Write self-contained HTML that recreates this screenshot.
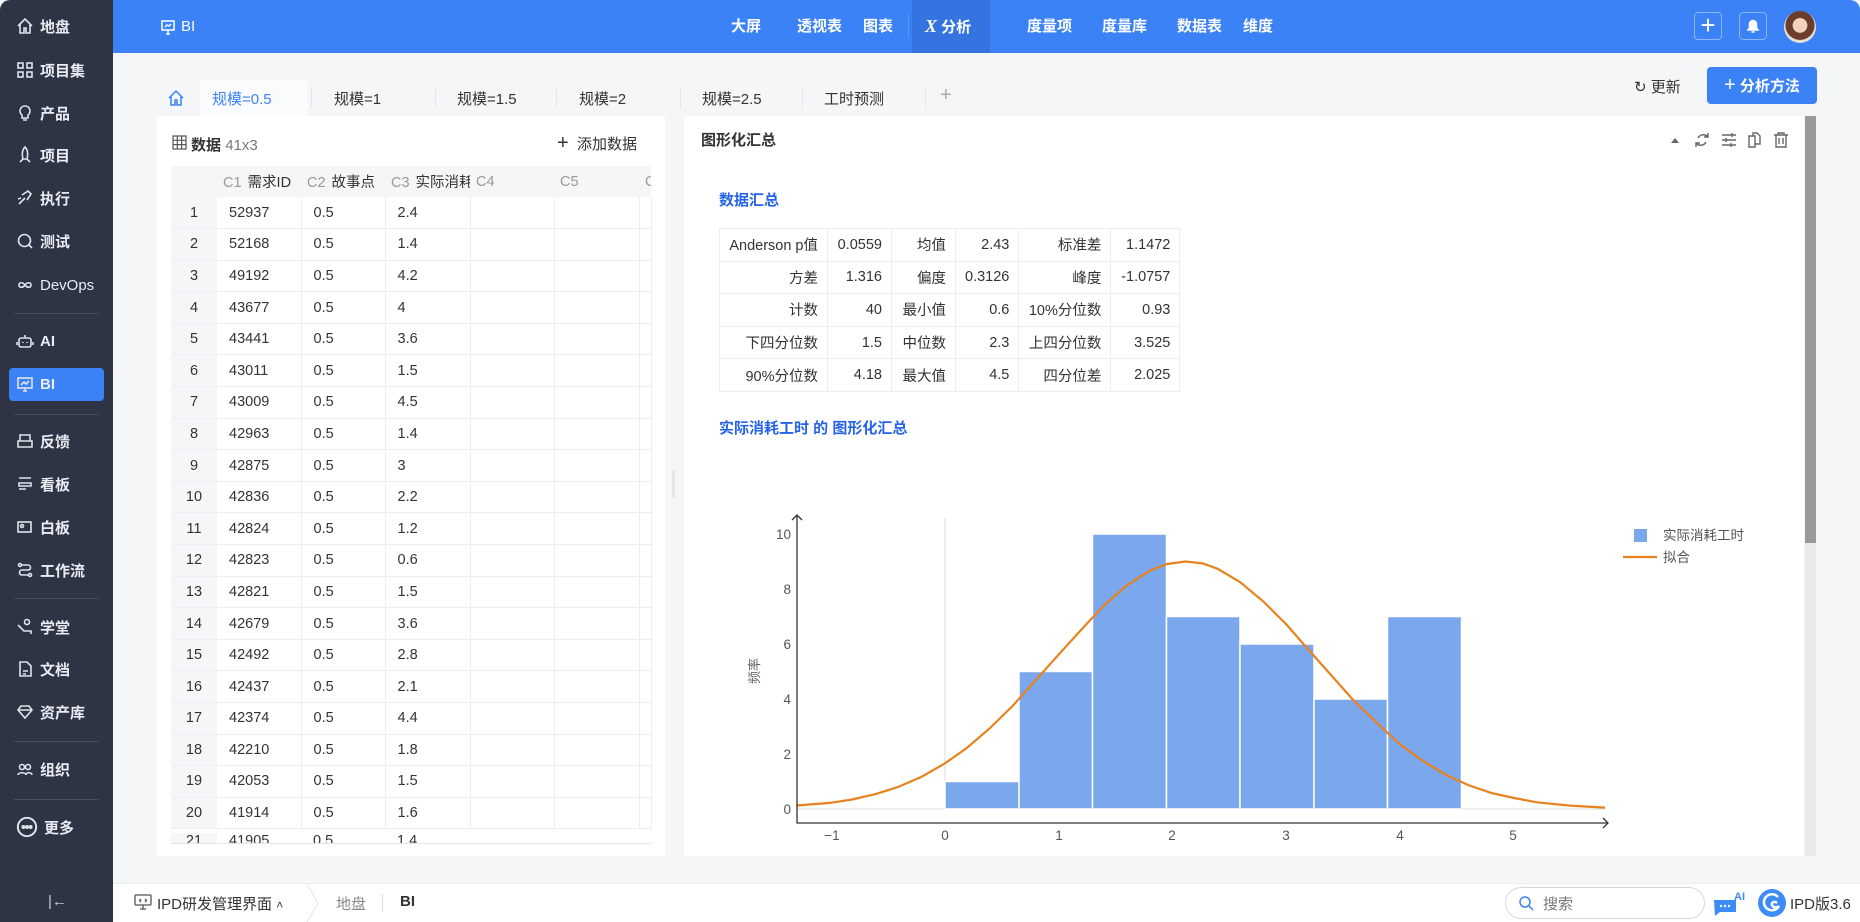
<!DOCTYPE html>
<html><head><meta charset="utf-8"><style>
*{box-sizing:border-box;margin:0;padding:0}
body{width:1860px;height:922px;overflow:hidden;background:#f5f6f8;font-family:"Liberation Sans","Noto Sans CJK SC",sans-serif;color:#333;position:relative}
.abs{position:absolute}
#side{left:0;top:0;width:113px;height:922px;background:#2e3444;border-top-left-radius:10px}
.si{position:absolute;left:16px;height:26px;display:flex;align-items:center;color:#e9ecf2;font-size:15px;font-weight:bold}
.si svg{width:18px;height:18px;margin-right:6px;fill:none;stroke:#dfe3ea;stroke-width:1.6}
.dv{position:absolute;left:14px;width:85px;height:1px;background:#464d5c}
#hdr{left:113px;top:0;width:1747px;height:53px;background:#3b82f6;border-top-right-radius:10px}
.nv{position:absolute;top:0;height:53px;line-height:53px;color:#fff;font-size:15px;font-weight:bold}
.tab{position:absolute;top:88px;font-size:15px;color:#333}
.sep{position:absolute;top:89px;width:1px;height:20px;background:#e3e5e9}
.panel{position:absolute;background:#fff}
table{border-collapse:collapse}
#dt{position:absolute;left:171px;top:166px;width:480px;font-size:14.5px;table-layout:fixed}
#dt td{height:31.6px;border-right:1px solid #eceef1;border-bottom:1px solid #eceef1;padding-left:12px;color:#333;white-space:nowrap;overflow:hidden}
#dt td.n{background:#f5f6f8;text-align:center;padding:0;border-right:none}
#dt tr.h td{background:#f5f6f8;color:#999;height:31px;border-right:none;border-bottom:none;padding-left:6px}
#dt tr.h td b{color:#333;font-weight:normal;margin-left:6px}
#st{position:absolute;left:719px;top:228px;font-size:14.5px}
#st td{border:1px solid #eceef1;height:32.6px;text-align:right;padding:0 9px;color:#333}
</style></head><body>
<div id="side" class="abs">
<div class="si" style="top:13px"><svg viewBox="0 0 18 18"><path d="M2 9 9 2l7 7M4 7v9h4v-5h2v5h4V7"/></svg>地盘</div>
<div class="si" style="top:57px"><svg viewBox="0 0 18 18"><rect x="2" y="2" width="5" height="5"/><rect x="11" y="2" width="5" height="5"/><rect x="2" y="11" width="5" height="5"/><rect x="11" y="11" width="5" height="5"/></svg>项目集</div>
<div class="si" style="top:100px"><svg viewBox="0 0 18 18"><path d="M9 2a5 5 0 0 0-3 9v3h6v-3a5 5 0 0 0-3-9zM7 16h4"/></svg>产品</div>
<div class="si" style="top:142px"><svg viewBox="0 0 18 18"><path d="M9 1c3 3 3 8 2 12H7C6 9 6 4 9 1zM7 13l-3 3M11 13l3 3"/></svg>项目</div>
<div class="si" style="top:185px"><svg viewBox="0 0 18 18"><path d="M3 15 9 9M6 6l6-4 3 3-4 6M2 10l3-1"/></svg>执行</div>
<div class="si" style="top:228px"><svg viewBox="0 0 18 18"><circle cx="8.5" cy="8.5" r="6"/><path d="M13 13l3 3"/></svg>测试</div>
<div class="si" style="top:272px;font-weight:normal"><svg viewBox="0 0 18 18"><path d="M9 9c-2-3-6-3-6 0s4 3 6 0 6-3 6 0-4 3-6 0"/></svg>DevOps</div>
<div class="dv" style="top:313px"></div>
<div class="si" style="top:328px"><svg viewBox="0 0 18 18"><rect x="3" y="6" width="12" height="9" rx="2"/><path d="M9 3v3M1 10v3M17 10v3M7 10v1M11 10v1"/></svg>AI</div>
<div class="abs" style="left:9px;top:368px;width:95px;height:33px;background:#3b82f6;border-radius:4px"></div>
<div class="si" style="top:371px"><svg viewBox="0 0 18 18"><rect x="2" y="3" width="14" height="10"/><path d="M5 10l3-3 2 2 3-3M7 16h4M9 13v3"/></svg>BI</div>
<div class="dv" style="top:414px"></div>
<div class="si" style="top:428px"><svg viewBox="0 0 18 18"><path d="M4 3h10v6H4zM2 9h14v6H2z"/></svg>反馈</div>
<div class="si" style="top:471px"><svg viewBox="0 0 18 18"><path d="M3 3h12M3 8h12v3H3zM3 14h7"/></svg>看板</div>
<div class="si" style="top:514px"><svg viewBox="0 0 18 18"><rect x="2" y="4" width="13" height="10"/><circle cx="6" cy="8" r="1.5"/></svg>白板</div>
<div class="si" style="top:557px"><svg viewBox="0 0 18 18"><circle cx="4" cy="4" r="1.5"/><circle cx="14" cy="14" r="1.5"/><path d="M6 4h6a2.5 2.5 0 0 1 0 5H6a2.5 2.5 0 0 0 0 5h6"/></svg>工作流</div>
<div class="dv" style="top:598px"></div>
<div class="si" style="top:614px"><svg viewBox="0 0 18 18"><circle cx="11" cy="4" r="2.5"/><path d="M2 7l6 6h7v3"/></svg>学堂</div>
<div class="si" style="top:656px"><svg viewBox="0 0 18 18"><path d="M4 2h7l4 4v10H4zM7 11h5M7 14h3"/></svg>文档</div>
<div class="si" style="top:699px"><svg viewBox="0 0 18 18"><path d="M2 7l3-4h8l3 4-7 8zM2 7h14"/></svg>资产库</div>
<div class="dv" style="top:741px"></div>
<div class="si" style="top:756px"><svg viewBox="0 0 18 18"><circle cx="6" cy="7" r="2.5"/><circle cx="12" cy="7" r="2.5"/><path d="M2 15c0-3 8-3 8 0M10 15c0-3 6-3 6 0"/></svg>组织</div>
<div class="dv" style="top:799px"></div>
<div class="si" style="top:814px"><svg viewBox="0 0 18 18" style="width:22px;height:22px"><circle cx="9" cy="9" r="7.5"/><circle cx="6" cy="9" r=".8" fill="#dfe3ea"/><circle cx="9" cy="9" r=".8" fill="#dfe3ea"/><circle cx="12" cy="9" r=".8" fill="#dfe3ea"/></svg>更多</div>
<div class="abs" style="left:48px;top:893px;color:#ccd;font-size:15px">|&larr;</div>
</div>

<div id="hdr" class="abs">
<svg class="abs" style="left:47px;top:19px" width="16" height="16" viewBox="0 0 16 16" fill="none" stroke="#fff" stroke-width="1.5"><rect x="2" y="2" width="12" height="9"/><path d="M5 8l2-2 2 1 2-2M6 15h4M8 11v4"/></svg>
<div class="nv" style="left:68px;font-weight:normal">BI</div>
<div class="nv" style="left:618px">大屏</div>
<div class="nv" style="left:684px">透视表</div>
<div class="nv" style="left:750px">图表</div>
<div class="abs" style="left:795px;top:14px;width:1px;height:24px;background:#5b96f7"></div>
<div class="abs" style="left:799px;top:0;width:78px;height:53px;background:#3574e0"></div>
<div class="nv" style="left:812px"><i style="font-family:'Liberation Serif',serif;font-size:18px">X</i> 分析</div>
<div class="nv" style="left:914px">度量项</div>
<div class="nv" style="left:989px">度量库</div>
<div class="nv" style="left:1064px">数据表</div>
<div class="nv" style="left:1130px">维度</div>
<div class="abs" style="left:1581px;top:12px;width:28px;height:28px;border:1px solid #8fb6fa;border-radius:4px;color:#fff;font-size:26px;line-height:24px;text-align:center">+</div>
<svg class="abs" style="left:1626px;top:12px" width="28" height="28" viewBox="0 0 28 28"><rect x=".5" y=".5" width="27" height="27" rx="4" fill="none" stroke="#8fb6fa"/><path d="M9 18h10l-1.5-2v-4a3.5 3.5 0 0 0-7 0v4zM12.5 20h3" fill="#fff" stroke="#fff" stroke-width="1.5"/></svg>
<div class="abs" style="left:1671px;top:11px;width:32px;height:32px;border-radius:50%;background:radial-gradient(circle at 50% 45%,#f3d2bd 0 30%,#6b3d2a 32% 60%,#e8dfd8 62%)"></div>
</div>

<div class="abs" style="left:200px;top:80px;width:108px;height:36px;background:#fafbfc"></div>
<svg class="abs" style="left:167px;top:89px" width="18" height="18" viewBox="0 0 18 18" fill="none" stroke="#3b82f6" stroke-width="1.5"><path d="M2 9 9 2l7 7M4 7v9h4v-5h2v5h4V7"/></svg>
<div class="tab" style="left:212px;color:#3b82f6">规模=0.5</div>
<div class="sep" style="left:311px"></div>
<div class="tab" style="left:334px">规模=1</div>
<div class="sep" style="left:435px"></div>
<div class="tab" style="left:457px">规模=1.5</div>
<div class="sep" style="left:556px"></div>
<div class="tab" style="left:579px">规模=2</div>
<div class="sep" style="left:680px"></div>
<div class="tab" style="left:702px">规模=2.5</div>
<div class="sep" style="left:802px"></div>
<div class="tab" style="left:824px">工时预测</div>
<div class="sep" style="left:925px"></div>
<div class="tab" style="left:940px;color:#aaa;font-size:20px;top:84px">+</div>

<div class="abs" style="left:1634px;top:76px;font-size:15px;color:#333">&#x21bb; 更新</div>
<div class="abs" style="left:1707px;top:67px;width:110px;height:37px;background:#3b82f6;border-radius:4px;color:#fff;font-size:15px;line-height:37px;text-align:center;font-weight:bold"><span style="font-size:20px;font-weight:normal">+</span> 分析方法</div>

<div class="panel" style="left:157px;top:116px;width:508px;height:740px"></div>
<svg class="abs" style="left:172px;top:135px" width="15" height="15" viewBox="0 0 15 15" fill="none" stroke="#555" stroke-width="1.2"><rect x="1" y="1" width="13" height="13"/><path d="M1 5.3h13M1 9.6h13M5.3 1v13M9.6 1v13"/></svg>
<div class="abs" style="left:191px;top:134px;font-size:15px"><b>数据</b> <span style="color:#777">41x3</span></div>
<div class="abs" style="left:557px;top:132px;font-size:15px"><span style="font-size:20px">+</span>&nbsp; 添加数据</div>
<table id="dt">
<colgroup><col style="width:46px"><col style="width:84px"><col style="width:84px"><col style="width:85px"><col style="width:84px"><col style="width:85px"><col style="width:12px"></colgroup>
<tr class="h"><td class="n"></td><td>C1<b>需求ID</b></td><td>C2<b>故事点</b></td><td>C3<b>实际消耗工时</b></td><td>C4</td><td>C5</td><td>C</td></tr>
<tr><td class="n">1</td><td>52937</td><td>0.5</td><td>2.4</td><td></td><td></td><td></td></tr>
<tr><td class="n">2</td><td>52168</td><td>0.5</td><td>1.4</td><td></td><td></td><td></td></tr>
<tr><td class="n">3</td><td>49192</td><td>0.5</td><td>4.2</td><td></td><td></td><td></td></tr>
<tr><td class="n">4</td><td>43677</td><td>0.5</td><td>4</td><td></td><td></td><td></td></tr>
<tr><td class="n">5</td><td>43441</td><td>0.5</td><td>3.6</td><td></td><td></td><td></td></tr>
<tr><td class="n">6</td><td>43011</td><td>0.5</td><td>1.5</td><td></td><td></td><td></td></tr>
<tr><td class="n">7</td><td>43009</td><td>0.5</td><td>4.5</td><td></td><td></td><td></td></tr>
<tr><td class="n">8</td><td>42963</td><td>0.5</td><td>1.4</td><td></td><td></td><td></td></tr>
<tr><td class="n">9</td><td>42875</td><td>0.5</td><td>3</td><td></td><td></td><td></td></tr>
<tr><td class="n">10</td><td>42836</td><td>0.5</td><td>2.2</td><td></td><td></td><td></td></tr>
<tr><td class="n">11</td><td>42824</td><td>0.5</td><td>1.2</td><td></td><td></td><td></td></tr>
<tr><td class="n">12</td><td>42823</td><td>0.5</td><td>0.6</td><td></td><td></td><td></td></tr>
<tr><td class="n">13</td><td>42821</td><td>0.5</td><td>1.5</td><td></td><td></td><td></td></tr>
<tr><td class="n">14</td><td>42679</td><td>0.5</td><td>3.6</td><td></td><td></td><td></td></tr>
<tr><td class="n">15</td><td>42492</td><td>0.5</td><td>2.8</td><td></td><td></td><td></td></tr>
<tr><td class="n">16</td><td>42437</td><td>0.5</td><td>2.1</td><td></td><td></td><td></td></tr>
<tr><td class="n">17</td><td>42374</td><td>0.5</td><td>4.4</td><td></td><td></td><td></td></tr>
<tr><td class="n">18</td><td>42210</td><td>0.5</td><td>1.8</td><td></td><td></td><td></td></tr>
<tr><td class="n">19</td><td>42053</td><td>0.5</td><td>1.5</td><td></td><td></td><td></td></tr>
<tr><td class="n">20</td><td>41914</td><td>0.5</td><td>1.6</td><td></td><td></td><td></td></tr>
</table>
<div class="abs" style="left:171px;top:829px;width:480px;height:14px;overflow:hidden"><div style="display:flex;font-size:14.5px;color:#333;padding-top:4px"><span style="width:46px;text-align:center;background:#f5f6f8">21</span><span style="padding-left:12px;width:84px">41905</span><span style="padding-left:12px;width:84px">0.5</span><span style="padding-left:12px">1.4</span></div></div>
<div class="abs" style="left:171px;top:843px;width:480px;height:1px;background:#e3e5e9"></div>
<div class="abs" style="left:672px;top:470px;width:3px;height:28px;background:#e6e7ea"></div>

<div class="panel" style="left:684px;top:116px;width:1120px;height:740px"></div>
<div class="abs" style="left:1805px;top:116px;width:11px;height:740px;background:#e8e9eb"></div>
<div class="abs" style="left:1805px;top:116px;width:11px;height:427px;background:#9a9a9a"></div>
<div class="abs" style="left:701px;top:129px;font-size:15px;font-weight:bold">图形化汇总</div>
<svg class="abs" style="left:1668px;top:130px" width="122" height="20" viewBox="0 0 122 20" fill="none" stroke="#666" stroke-width="1.4">
<path d="M3 13h8l-4-5z" fill="#666" stroke="none"/>
<path d="M40 7a6 6 0 0 0-10 1M28 13a6 6 0 0 0 10-1M40 3v4h-4M28 17v-4h4"/>
<path d="M54 5h14M54 10h14M54 15h14M64 3v4M58 8v4M63 13v4"/>
<path d="M81 6h6v11h-6zM85 6V3h4l3 3v8h-5"/>
<path d="M106 5h14M110 5V3h6v2M108 5v12h10V5M111 8v6M115 8v6"/>
</svg>
<div class="abs" style="left:719px;top:189px;font-size:15px;font-weight:bold;color:#2563eb">数据汇总</div>
<table id="st">
<colgroup><col style="width:108px"><col style="width:64px"><col style="width:64px"><col style="width:63px"><col style="width:92px"><col style="width:69px"></colgroup>
<tr><td>Anderson p值</td><td>0.0559</td><td>均值</td><td>2.43</td><td>标准差</td><td>1.1472</td></tr>
<tr><td>方差</td><td>1.316</td><td>偏度</td><td>0.3126</td><td>峰度</td><td>-1.0757</td></tr>
<tr><td>计数</td><td>40</td><td>最小值</td><td>0.6</td><td>10%分位数</td><td>0.93</td></tr>
<tr><td>下四分位数</td><td>1.5</td><td>中位数</td><td>2.3</td><td>上四分位数</td><td>3.525</td></tr>
<tr><td>90%分位数</td><td>4.18</td><td>最大值</td><td>4.5</td><td>四分位差</td><td>2.025</td></tr>
</table>
<div class="abs" style="left:719px;top:417px;font-size:15px;font-weight:bold;color:#2563eb">实际消耗工时 的 图形化汇总</div>

<svg class="abs" style="left:0;top:0" width="1860" height="922" viewBox="0 0 1860 922">
<line x1="945" y1="518" x2="945" y2="809" stroke="#ddd" stroke-width="1"/>
<line x1="797" y1="809" x2="1605" y2="809" stroke="#ddd" stroke-width="1"/>
<g fill="#7ba7ec" stroke="#fff" stroke-width="1.5">
<rect x="945" y="781.5" width="74" height="27.5"/>
<rect x="1019" y="671.5" width="73.5" height="137.5"/>
<rect x="1092.5" y="534" width="74" height="275"/>
<rect x="1166.5" y="616.5" width="73.5" height="192.5"/>
<rect x="1240" y="644" width="74" height="165"/>
<rect x="1314" y="699" width="73.5" height="110"/>
<rect x="1387.5" y="616.5" width="74" height="192.5"/>
</g>
<polyline fill="none" stroke="#e8821e" stroke-width="2.2" points="797,805.5 830,802.9 852,799.5 875.6,794.1 898,787 921.2,777 944,764 966.8,748 989,729 1012.4,706.1 1035,681 1058,655.3 1081,630 1103.6,605.8 1126,586 1149.2,571 1167,564 1185.7,561.5 1203,563.5 1217.6,568.8 1240,582 1263.2,601.4 1286,624 1308.8,650.1 1331,675 1354.4,701.3 1377,723 1400,744.4 1423,761 1445.6,774.6 1468,785 1491.2,792.9 1514,798 1536.8,802.3 1570,805.6 1605,807.6"/>
<path d="M797 515V823H1608" fill="none" stroke="#333" stroke-width="1.3"/>
<path d="M792 520l5-5 5 5M1603 818l5 5-5 5" fill="none" stroke="#333" stroke-width="1.3"/>
<g font-size="13.5" fill="#555" text-anchor="end" font-family="Liberation Sans,sans-serif">
<text x="791" y="814">0</text><text x="791" y="759">2</text><text x="791" y="704">4</text><text x="791" y="649">6</text><text x="791" y="594">8</text><text x="791" y="539">10</text>
</g>
<g font-size="13.5" fill="#555" text-anchor="middle" font-family="Liberation Sans,sans-serif">
<text x="832" y="840">−1</text><text x="945" y="840">0</text><text x="1059" y="840">1</text><text x="1172" y="840">2</text><text x="1286" y="840">3</text><text x="1400" y="840">4</text><text x="1513" y="840">5</text>
</g>
<text x="0" y="0" font-size="13" fill="#666" transform="translate(759,684) rotate(-90)">频率</text>
<rect x="1634" y="529" width="13" height="13" fill="#7ba7ec"/>
<text x="1663" y="540" font-size="13.5" fill="#555">实际消耗工时</text>
<line x1="1623" y1="557" x2="1657" y2="557" stroke="#e8821e" stroke-width="2.2"/>
<text x="1663" y="562" font-size="13.5" fill="#555">拟合</text>
</svg>

<div class="abs" style="left:113px;top:883px;width:1747px;height:39px;background:#fff;border-top:1px solid #eee"></div>
<svg class="abs" style="left:134px;top:894px" width="18" height="16" viewBox="0 0 18 16" fill="none" stroke="#555" stroke-width="1.3"><rect x="1" y="1" width="16" height="10" rx="1"/><path d="M6 15h6M9 11v4M7 5l-1.5 1.5L7 8M11 5l1.5 1.5L11 8"/></svg>
<div class="abs" style="left:157px;top:893px;font-size:15px;color:#333">IPD研发管理界面 <span style="font-size:12px">&#x2C4;</span></div>
<svg class="abs" style="left:306px;top:884px" width="14" height="38" viewBox="0 0 14 38" fill="none" stroke="#e2e4e8"><path d="M1 0l11 19L1 38"/></svg>
<div class="abs" style="left:336px;top:893px;font-size:15px;color:#888">地盘</div>
<div class="abs" style="left:382px;top:894px;width:1px;height:18px;background:#ddd"></div>
<div class="abs" style="left:400px;top:893px;font-size:15px;font-weight:bold;color:#333">BI</div>
<div class="abs" style="left:1505px;top:887px;width:200px;height:32px;border:1px solid #d5d8dd;border-radius:16px"></div>
<svg class="abs" style="left:1518px;top:895px" width="16" height="16" viewBox="0 0 16 16" fill="none" stroke="#3b82f6" stroke-width="1.5"><circle cx="7" cy="7" r="5"/><path d="M11 11l4 4"/></svg>
<div class="abs" style="left:1543px;top:893px;font-size:15px;color:#777">搜索</div>
<svg class="abs" style="left:1712px;top:890px" width="34" height="28" viewBox="0 0 34 28"><path d="M2 10h22v12H8l-5 4z" fill="#3b8cf5"/><circle cx="9" cy="16" r="1.2" fill="#fff"/><circle cx="13" cy="16" r="1.2" fill="#fff"/><circle cx="17" cy="16" r="1.2" fill="#fff"/><text x="22" y="10" font-size="11" font-weight="bold" fill="#3b8cf5">AI</text></svg>
<svg class="abs" style="left:1757px;top:888px" width="30" height="30" viewBox="0 0 30 30"><circle cx="15" cy="15" r="14" fill="#3b8cf5"/><path d="M21 9a8 8 0 1 0 1 9c-2 2-6 2-7-1s3-4 5-2" fill="none" stroke="#fff" stroke-width="2.5"/></svg>
<div class="abs" style="left:1790px;top:893px;font-size:15px;color:#333">IPD版3.6</div>
</body></html>
